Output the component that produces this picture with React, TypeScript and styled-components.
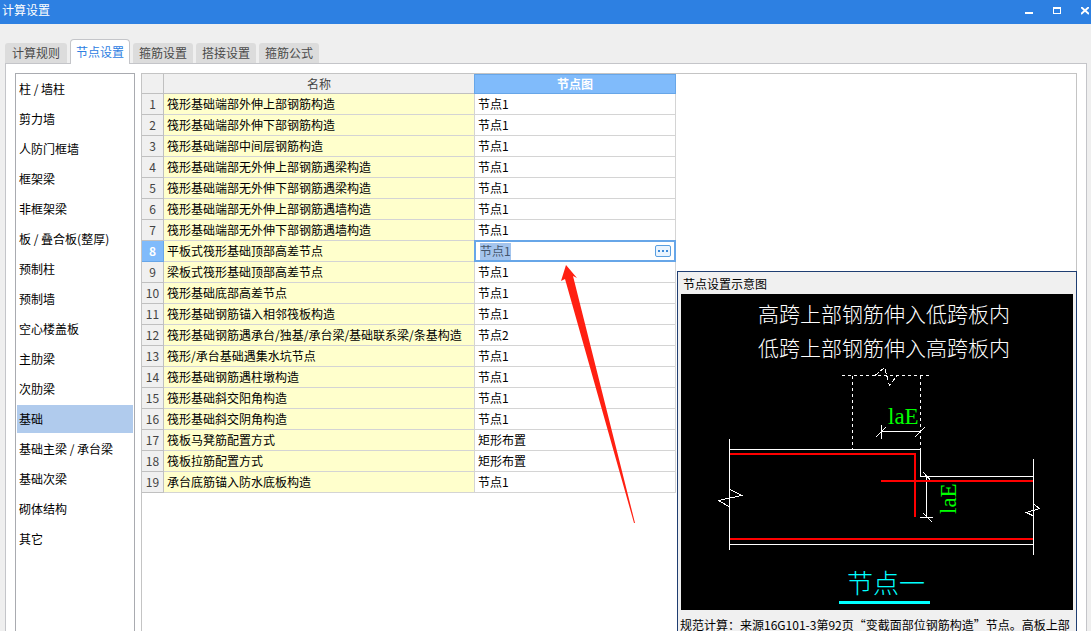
import React from 'react';
import styled, { createGlobalStyle, css } from 'styled-components';

const GlobalStyle = createGlobalStyle`
  *, *::before, *::after { box-sizing: border-box; }
  html, body, #root { height: 100%; }
  body {
    margin: 0;
    overflow: hidden;
    background: #efefef;
    color: #000;
    font: 12px/20px "Noto Sans CJK SC", sans-serif;
  }
  button, input { font: inherit; color: inherit; }
`;

const Window = styled.div`
  display: flex;
  flex-direction: column;
  height: 100%;
  overflow: hidden;
`;

const TitleBar = styled.header`
  flex: none;
  display: flex;
  align-items: flex-start;
  justify-content: space-between;
  height: 24px;
  padding-left: 2px;
  background: #2d80e2;
  color: #fff;
`;

const Title = styled.h1`
  margin: 0;
  font-size: 12px;
  font-weight: 400;
`;

const WindowControls = styled.div`
  display: flex;
  gap: 16px;
`;

const ControlButton = styled.button`
  display: flex;
  align-items: center;
  justify-content: center;
  width: 12px;
  height: 22px;
  padding: 0;
  border: 0;
  background: none;
`;

const TabBar = styled.nav`
  flex: none;
  position: relative;
  z-index: 1;
  display: flex;
  align-items: flex-end;
  gap: 3px;
  height: 40px;
  margin-bottom: -1px;
  padding-left: 5px;
`;

const Tab = styled.button<{ $active?: boolean }>`
  width: 60px;
  height: 20px;
  margin-bottom: 1px;
  padding: 0;
  border: 0;
  border-radius: 3px 3px 0 0;
  background: #dcdcdc;
  color: #4a4a4a;
  line-height: 20px;
  &:first-child {
    width: 62px;
  }
  ${(p) =>
    p.$active &&
    css`
      height: 25px;
      margin-bottom: 0;
      border: 1px solid #c4c5c9;
      border-bottom: 0;
      border-radius: 4px 4px 0 0;
      background: #fff;
      color: #2d80e2;
      line-height: 24px;
    `}
`;

const Panel = styled.main`
  flex: 1;
  min-height: 0;
  display: flex;
  gap: 6px;
  margin: 0 4px 0 5px;
  padding: 9px 9px 0;
  border: 1px solid #c4c5c9;
  border-bottom: 0;
  background: #fff;
`;

const CategoryList = styled.ul`
  flex: none;
  width: 120px;
  margin: 0;
  padding: 1px;
  border: 1px solid #a9abb0;
  border-bottom: 0;
  list-style: none;
`;

const CategoryButton = styled.button<{ $selected?: boolean }>`
  display: block;
  width: 100%;
  height: 28px;
  margin: 0 0 2px;
  padding: 0 2px;
  border: 0;
  background: ${(p) => (p.$selected ? '#b0cbed' : 'transparent')};
  text-align: left;
  white-space: pre;
`;

const GridArea = styled.section`
  flex: 1;
  min-width: 0;
  position: relative;
  border: 1px solid #c4c4c4;
  border-bottom: 0;
`;

const Grid = styled.table`
  width: 534px;
  table-layout: fixed;
  border-collapse: separate;
  border-spacing: 0;
`;

const NumberColumn = styled.col`
  width: 22px;
`;

const NameColumn = styled.col`
  width: 311px;
`;

const HeadCell = styled.th<{ $active?: boolean }>`
  height: 20px;
  padding: 0;
  border-right: 1px solid #c0c0c0;
  border-bottom: 1px solid #c0c0c0;
  background: #f0f0f0;
  color: #444;
  font-weight: 400;
  line-height: 19px;
  ${(p) =>
    p.$active &&
    css`
      border-color: #67a6e8;
      background: #80bbfb;
      box-shadow: inset 0 1px #67a6e8, -1px 0 #67a6e8;
      color: #fff;
      font-weight: 700;
    `}
`;

const RowNumber = styled.th<{ $active?: boolean }>`
  height: 21px;
  padding: 0;
  border-right: 1px solid #c0c0c0;
  border-bottom: 1px solid #c0c0c0;
  background: #f0f0f0;
  color: #444;
  font-weight: 400;
  ${(p) =>
    p.$active &&
    css`
      border-color: #67a6e8;
      background: #80bbfb;
      color: #fff;
      font-weight: 700;
    `}
`;

const NameCell = styled.td`
  padding: 0 3px;
  border-right: 1px solid #d4d4d4;
  border-bottom: 1px solid #d4d4d4;
  background: #ffffcc;
  white-space: nowrap;
`;

const ValueCell = styled.td`
  padding: 0 3px;
  border-right: 1px solid #d4d4d4;
  border-bottom: 1px solid #d4d4d4;
`;

const EditorCell = styled.td`
  padding: 0;
`;

const Editor = styled.div`
  display: flex;
  align-items: center;
  height: 22px;
  margin: -1px 0 0 -1px;
  padding: 0 3px 0 4px;
  border: 2px solid #67a6e8;
  background: #fff;
`;

const EditorInput = styled.input`
  flex: none;
  width: 31px;
  height: 17px;
  padding: 0;
  border: 0;
  outline: 0;
  background: #a4c4ed;
  color: #44566c;
`;

const MoreButton = styled.button`
  display: flex;
  align-items: center;
  justify-content: center;
  width: 16px;
  height: 12px;
  margin-left: auto;
  padding: 0;
  border: 1px solid #5a9fe0;
  border-radius: 2px;
  background: #eaf4fe;
`;

const Preview = styled.aside`
  position: absolute;
  top: 197px;
  right: -1px;
  bottom: 0;
  width: 400px;
  padding: 2px 3px 0;
  overflow: hidden;
  border: 1px solid #1f3e72;
  border-bottom: 0;
  background: #f0f0f0;
`;

const PreviewTitle = styled.h2`
  margin: 0;
  padding: 0 2px;
  font-size: 12px;
  font-weight: 400;
`;

const Drawing = styled.svg`
  display: block;
  width: 392px;
  height: 316px;
  background: #000;
`;

const Note = styled.p`
  margin: 9px -1px 0;
  line-height: 12px;
  white-space: nowrap;
`;

const Pointer = styled.svg`
  position: absolute;
  top: 190px;
  left: 408px;
  width: 100px;
  height: 265px;
  pointer-events: none;
`;

const tabs = ['计算规则', '节点设置', '箍筋设置', '搭接设置', '箍筋公式'];

const categories = [
  '柱 / 墙柱', '剪力墙', '人防门框墙', '框架梁', '非框架梁', '板 / 叠合板(整厚)',
  '预制柱', '预制墙', '空心楼盖板', '主肋梁', '次肋梁', '基础',
  '基础主梁 / 承台梁', '基础次梁', '砌体结构', '其它',
];

const rows: [string, string][] = [
  ['筏形基础端部外伸上部钢筋构造', '节点1'],
  ['筏形基础端部外伸下部钢筋构造', '节点1'],
  ['筏形基础端部中间层钢筋构造', '节点1'],
  ['筏形基础端部无外伸上部钢筋遇梁构造', '节点1'],
  ['筏形基础端部无外伸下部钢筋遇梁构造', '节点1'],
  ['筏形基础端部无外伸上部钢筋遇墙构造', '节点1'],
  ['筏形基础端部无外伸下部钢筋遇墙构造', '节点1'],
  ['平板式筏形基础顶部高差节点', '节点1'],
  ['梁板式筏形基础顶部高差节点', '节点1'],
  ['筏形基础底部高差节点', '节点1'],
  ['筏形基础钢筋锚入相邻筏板构造', '节点1'],
  ['筏形基础钢筋遇承台/独基/承台梁/基础联系梁/条基构造', '节点2'],
  ['筏形/承台基础遇集水坑节点', '节点1'],
  ['筏形基础钢筋遇柱墩构造', '节点1'],
  ['筏形基础斜交阳角构造', '节点1'],
  ['筏形基础斜交阴角构造', '节点1'],
  ['筏板马凳筋配置方式', '矩形布置'],
  ['筏板拉筋配置方式', '矩形布置'],
  ['承台底筋锚入防水底板构造', '节点1'],
];

const editedRow = 7;

function NodeDrawing() {
  return (
    <Drawing viewBox="681 294 392 316" role="img" aria-label="节点一">
      <g fill="#fff" fontFamily='"Noto Sans CJK SC", sans-serif' fontWeight="300" fontSize="21" textAnchor="middle">
        <text x="884" y="322">高跨上部钢筋伸入低跨板内</text>
        <text x="884" y="356">低跨上部钢筋伸入高跨板内</text>
      </g>
      <g fill="none" stroke="#fff" shapeRendering="crispEdges">
        <path strokeDasharray="3 3" d="M842 375.5H930M852.5 376V449M920.5 376V449" />
        <path strokeDasharray="5 2" d="M875 375.5L884.5 367.5L889.5 385.5L897 375.5" />
        <path d="M729.5 439V550M729.5 489L741.5 495.5L718.5 500.5L729.5 507M729 449.5H920.5V476.5H1033M729 544.5H1033" />
        <path d="M1033.5 459V555M1033.5 504L1039.5 508.5L1026.5 512.5L1033.5 516" />
        <path d="M876 437L886 427M881.5 425V439M881 431.5H921M915 437L925 427" />
        <path d="M923 472L932 482M926.5 476V518M920 517.5H933M923 513L932 522" />
      </g>
      <path fill="none" stroke="#f00" strokeWidth="2" d="M730 454H915V517M881 481H1033M730 539H1033" />
      <g fill="#0f0" fontFamily='"Liberation Serif", serif' fontSize="23">
        <text x="888" y="424">laE</text>
        <text transform="translate(956 514) rotate(-90)">laE</text>
      </g>
      <text x="847" y="593" fill="#0ff" fontFamily='"Noto Sans CJK SC", sans-serif' fontWeight="300" fontSize="26">节点一</text>
      <path stroke="#0ff" strokeWidth="3" d="M839 602.5H930" />
    </Drawing>
  );
}

export default function App() {
  return (
    <>
      <GlobalStyle />
      <Window>
        <TitleBar>
          <Title>计算设置</Title>
          <WindowControls>
            <ControlButton aria-label="最小化">
              <svg width="8" height="8" fill="#fff"><path d="M0 5h8v2H0z" /></svg>
            </ControlButton>
            <ControlButton aria-label="最大化">
              <svg width="8" height="8" fill="#fff" fillRule="evenodd"><path d="M0 0h8v7H0zM1 2v4h6V2z" /></svg>
            </ControlButton>
            <ControlButton aria-label="关闭">
              <svg width="8" height="8" stroke="#fff" strokeWidth="2"><path d="M0 0L8 7M8 0L0 7" /></svg>
            </ControlButton>
          </WindowControls>
        </TitleBar>
        <TabBar>
          {tabs.map((label) => (
            <Tab key={label} $active={label === '节点设置'}>{label}</Tab>
          ))}
        </TabBar>
        <Panel>
          <CategoryList>
            {categories.map((label) => (
              <li key={label}>
                <CategoryButton $selected={label === '基础'}>{label}</CategoryButton>
              </li>
            ))}
          </CategoryList>
          <GridArea>
            <Grid>
              <colgroup>
                <NumberColumn />
                <NameColumn />
                <col />
              </colgroup>
              <thead>
                <tr>
                  <HeadCell />
                  <HeadCell>名称</HeadCell>
                  <HeadCell $active>节点图</HeadCell>
                </tr>
              </thead>
              <tbody>
                {rows.map(([name, value], i) => (
                  <tr key={name}>
                    <RowNumber scope="row" $active={i === editedRow}>{i + 1}</RowNumber>
                    <NameCell>{name}</NameCell>
                    {i === editedRow ? (
                      <EditorCell>
                        <Editor>
                          <EditorInput aria-label={name} defaultValue={value} />
                          <MoreButton aria-label="选择节点">
                            <svg width="10" height="2" fill="#3d8ad8"><path d="M0 0h2v2H0zM4 0h2v2H4zM8 0h2v2H8z" /></svg>
                          </MoreButton>
                        </Editor>
                      </EditorCell>
                    ) : (
                      <ValueCell>{value}</ValueCell>
                    )}
                  </tr>
                ))}
              </tbody>
            </Grid>
            <Preview>
              <PreviewTitle>节点设置示意图</PreviewTitle>
              <NodeDrawing />
              <Note>规范计算：来源16G101-3第92页“变截面部位钢筋构造”节点。高板上部</Note>
            </Preview>
            <Pointer viewBox="550 264 100 265" aria-hidden="true">
              <path fill="#ff2012" d="M566 265L577 278L573 276L635 523H634L565 279L561 281Z" />
            </Pointer>
          </GridArea>
        </Panel>
      </Window>
    </>
  );
}
